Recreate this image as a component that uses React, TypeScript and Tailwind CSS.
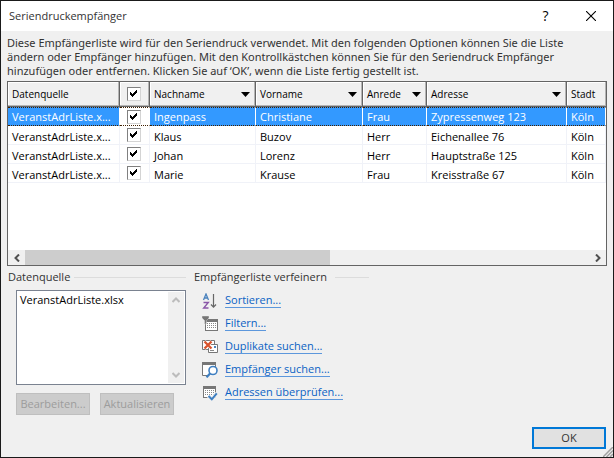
import { useState, type ReactNode } from "react";

const columns = [
  { key: "nachname", label: "Nachname" },
  { key: "vorname", label: "Vorname" },
  { key: "anrede", label: "Anrede" },
  { key: "adresse", label: "Adresse" },
  { key: "stadt", label: "Stadt" },
] as const;

const recipients = [
  { nachname: "Ingenpass", vorname: "Christiane", anrede: "Frau", adresse: "Zypressenweg 123", stadt: "Köln" },
  { nachname: "Klaus", vorname: "Buzov", anrede: "Herr", adresse: "Eichenallee 76", stadt: "Köln" },
  { nachname: "Johan", vorname: "Lorenz", anrede: "Herr", adresse: "Hauptstraße 125", stadt: "Köln" },
  { nachname: "Marie", vorname: "Krause", anrede: "Frau", adresse: "Kreisstraße 67", stadt: "Köln" },
];

function CheckBox({ label, checked, onChange }: { label: string; checked: boolean; onChange: () => void }) {
  return (
    <label className="relative ml-[7px] block h-[14px] w-[14px]">
      <input
        type="checkbox"
        aria-label={label}
        checked={checked}
        onChange={onChange}
        className="peer block h-[14px] w-[14px] appearance-none border border-t-[#808080] border-r-[#d4d4d4] border-b-[#d4d4d4] border-l-[#808080] bg-white"
      />
      <svg
        viewBox="0 0 14 14"
        shapeRendering="crispEdges"
        className="pointer-events-none absolute inset-0 hidden h-[14px] w-[14px] peer-checked:block"
      >
        <path d="M3 5h1v1h1v1h1v-1h1v-1h1v-1h1v-1h1v3h-1v1h-1v1h-1v1h-1v1h-1v-1h-1v-1h-1z" fill="#000" />
      </svg>
    </label>
  );
}

function Chevron({ d }: { d: string }) {
  return (
    <svg viewBox="0 0 8 8" className="block h-2 w-2" fill="none" stroke="currentColor" strokeWidth="2">
      <path d={d} />
    </svg>
  );
}

function Calendar({ x, y }: { x: number; y: number }) {
  return (
    <g shapeRendering="crispEdges">
      <rect x={x} y={y} width="13" height="12" fill="#fff" />
      <path d={`M${x} ${y}h13v12h-13zM${x + 1} ${y + 3}v8h11v-8z`} fill="#777" fillRule="evenodd" />
      <path
        d={`M${x + 2} ${y + 4}.5h10M${x + 2} ${y + 6}.5h10M${x + 2} ${y + 8}.5h10`}
        stroke="#888"
        strokeDasharray="1 1"
      />
    </g>
  );
}

const tools: { label: string; icon: ReactNode }[] = [
  {
    label: "Sortieren...",
    icon: (
      <>
        <path d="M1.5 7 4 1l2.5 6M2.3 5h3.4" stroke="#4a82bd" strokeWidth="1.3" fill="none" />
        <path d="M1.5 9.5h4.8L1.7 15h4.8" stroke="#8a57a8" strokeWidth="1.4" fill="none" />
        <path d="M11.5 1v13M9 11.5l2.5 2.7 2.5-2.7" stroke="#666" strokeWidth="1.2" fill="none" />
      </>
    ),
  },
  {
    label: "Filtern...",
    icon: (
      <>
        <Calendar x={3} y={3} />
        <path d="M0 0h7v2L4.5 4.5V8h-2V4.5L0 2z" fill="#777" stroke="#f0f0f0" strokeWidth=".4" />
      </>
    ),
  },
  {
    label: "Duplikate suchen...",
    icon: (
      <>
        <path d="M.5 1.5h12v9H.5z" fill="#fff" stroke="#777" />
        <path d="M6.5 5.5h9v8h-9z" fill="#fff" stroke="#777" />
        <path d="M12 7h2v2h-2z" fill="#4a82bd" />
        <path d="M8 11.5h4" stroke="#888" />
        <path d="m2.500 2.500 7 7m0-7-7 7" stroke="#fff" strokeWidth="3.5" />
        <path d="m2.500 2.500 7 7m0-7-7 7" stroke="#d9532c" strokeWidth="2.3" />
      </>
    ),
  },
  {
    label: "Empfänger suchen...",
    icon: (
      <>
        <path d="M.5 .5h13v13H.5z" fill="#fff" />
        <path d="M0 0h14v3H0z" fill="#777" />
        <path d="M.5 3v10.5H5M13.5 3v2" stroke="#777" fill="none" />
        <circle cx="11" cy="8.500" r="4" fill="#fff" stroke="#3f7fc1" strokeWidth="1.6" />
        <path d="m8.300 11.300-3.800 4" stroke="#3f7fc1" strokeWidth="2.2" />
      </>
    ),
  },
  {
    label: "Adressen überprüfen...",
    icon: (
      <>
        <Calendar x={1} y={1} />
        <path d="m6.5 11 3.3 3.3 5-6" stroke="#f0f0f0" strokeWidth="4" fill="none" />
        <path d="m6.5 11 3.3 3.3 5-6" stroke="#3f7fc1" strokeWidth="2" fill="none" />
      </>
    ),
  },
];

export default function App() {
  const [checked, setChecked] = useState(recipients.map(() => true));
  const all = checked.every(Boolean);
  const toggle = (row: number) => setChecked(checked.map((c, i) => (i === row ? !c : c)));

  return (
    <main className="relative flex min-h-screen flex-col border border-[#1a1a1a] bg-[#f0f0f0] font-['Open_Sans',sans-serif] text-[11px] leading-[14px] text-[#333]">
      <header className="flex h-[30px] items-center bg-white pl-2">
        <h1 className="flex-1">Seriendruckempfänger</h1>
        <button aria-label="Hilfe" className="w-[45px] text-sm leading-[14px] text-black">
          ?
        </button>
        <button aria-label="Schließen" className="flex w-[45px] justify-center text-black">
          <svg viewBox="0 0 10 10" className="h-[10px] w-[10px]" stroke="currentColor" strokeWidth="1.1">
            <path d="M0 0l10 10M10 0 0 10" />
          </svg>
        </button>
      </header>

      <p className="px-1.5 pt-[5px] pb-[3px] font-['Noto_Sans',sans-serif]">
        Diese Empfängerliste wird für den Seriendruck verwendet. Mit den folgenden Optionen können Sie die Liste
        <br />
        ändern oder Empfänger hinzufügen. Mit den Kontrollkästchen können Sie für den Seriendruck Empfänger
        <br />
        hinzufügen oder entfernen. Klicken Sie auf ‘OK’, wenn die Liste fertig gestellt ist.
      </p>

      <section className="mx-1.5 flex h-[185px] flex-col justify-between border border-[#646464] bg-white text-black">
        <table className="w-full table-fixed border-separate border-spacing-0">
          <colgroup>
            <col className="w-[112px]" />
            <col className="w-[30px]" />
            <col className="w-[106px]" />
            <col className="w-[107px]" />
            <col className="w-[64px]" />
            <col className="w-[140px]" />
            <col />
          </colgroup>
          <thead>
            <tr className="h-[25px] bg-[#f0f0f0] text-left text-[10px] [&>th]:border-r [&>th]:border-b [&>th]:border-[#646464] [&>th]:p-0 [&>th]:font-normal [&>th]:shadow-[inset_-1px_-1px_#b4b4b4,inset_1px_1px_#fff] [&>th:last-child]:border-r-0 [&>th:not(:nth-child(2))]:pl-1">
              <th>Datenquelle</th>
              <th>
                <CheckBox label="Alle auswählen" checked={all} onChange={() => setChecked(checked.map(() => !all))} />
              </th>
              {columns.map((c) => (
                <th key={c.key}>
                  <div className="flex items-center justify-between pr-[5px]">
                    {c.label}
                    {c.key !== "stadt" && (
                      <button aria-label={c.label + " filtern"}>
                        <svg viewBox="0 0 9 5" className="h-[5px] w-[9px]">
                          <path d="M0 0h9L4.5 5z" />
                        </svg>
                      </button>
                    )}
                  </div>
                </th>
              ))}
            </tr>
          </thead>
          <tbody>
            {recipients.map((r, i) => (
              <tr
                key={r.nachname}
                className={
                  i === 0
                    ? "h-[19px] bg-[#3399ff] text-white [&>td]:border-y [&>td]:border-r [&>td]:border-y-[#402000] [&>td]:border-r-white [&>td]:p-0 [&>td]:[border-block-style:dotted] [&>td:not(:nth-child(2))]:pl-1"
                    : "h-[19px] [&>td]:border-r [&>td]:border-b [&>td]:border-[#f0f2f8] [&>td]:p-0 [&>td]:align-bottom [&>td:not(:nth-child(2))]:pl-1 [&>td:nth-child(2)]:align-middle"
                }
              >
                <td>VeranstAdrListe.x...</td>
                <td className="bg-white">
                  <CheckBox label={r.nachname} checked={checked[i]} onChange={() => toggle(i)} />
                </td>
                {columns.map((c) => (
                  <td key={c.key}>{r[c.key]}</td>
                ))}
              </tr>
            ))}
          </tbody>
        </table>
        <div className="flex h-[15px] items-center bg-[#f0f0f0] text-[#505050]">
          <button aria-label="Nach links" className="flex w-[17px] justify-center">
            <Chevron d="M6 0.5 2.5 4 6 7.5" />
          </button>
          <div className="h-full flex-1">
            <div className="h-full w-[54%] bg-[#cdcdcd]" />
          </div>
          <button aria-label="Nach rechts" className="flex w-[17px] justify-center">
            <Chevron d="M2 0.5 5.5 4 2 7.5" />
          </button>
        </div>
      </section>

      <div className="flex gap-2 px-[7px] pt-1">
        <section className="w-[178px]">
          <h2 className="flex items-center gap-1 after:h-px after:flex-1 after:bg-[#dcdcdc]">
            <label htmlFor="quelle">Datenquelle</label>
          </h2>
          <div className="mt-1.5 ml-2 flex h-[95px] border border-[#7a8290] bg-white text-black">
            <select id="quelle" size={6} className="min-w-0 flex-1 appearance-none overflow-hidden p-px outline-none">
              <option className="p-0 px-0.5">VeranstAdrListe.xlsx</option>
            </select>
            <div className="m-px flex w-4 flex-col items-center justify-between bg-[#f0f0f0] py-1 text-[#bcbcbc]">
              <button aria-label="Nach oben">
                <Chevron d="M0.5 6 4 2.5 7.5 6" />
              </button>
              <button aria-label="Nach unten">
                <Chevron d="M0.5 2 4 5.5 7.5 2" />
              </button>
            </div>
          </div>
          <div className="mt-2 ml-2 flex gap-[10px] text-[#9c9c9c]">
            <button disabled className="h-[22px] w-[74px] border border-[#bfbfbf] bg-[#cccccc]">
              Bearbeiten...
            </button>
            <button disabled className="h-[22px] w-[74px] border border-[#bfbfbf] bg-[#cccccc]">
              Aktualisieren
            </button>
          </div>
        </section>

        <section className="w-[175px]">
          <h2 className="flex items-center gap-2 after:h-px after:flex-1 after:bg-[#dcdcdc]">
            Empfängerliste verfeinern
          </h2>
          <ul className="mt-[5px] pl-2">
            {tools.map((t) => (
              <li key={t.label} className="flex h-[23px] items-center gap-[7px]">
                <svg viewBox="0 0 16 16" className="h-4 w-4">
                  {t.icon}
                </svg>
                <a href="#" className="border-b border-[#5c97dc] text-[#0a62c4]">
                  {t.label}
                </a>
              </li>
            ))}
          </ul>
        </section>
      </div>

      <footer className="mt-auto flex justify-end px-[7px] pb-2">
        <button className="h-[22px] w-[74px] border-2 border-[#0078d7] bg-[#e1e1e1]">OK</button>
      </footer>
      <svg viewBox="0 0 10 10" className="absolute right-0 bottom-0 h-[10px] w-[10px]" stroke="#a0a0a0" strokeWidth="1.5">
        <path d="M0 10 10 0M3.5 10 10 3.5M7 10l3-3" />
      </svg>
    </main>
  );
}
